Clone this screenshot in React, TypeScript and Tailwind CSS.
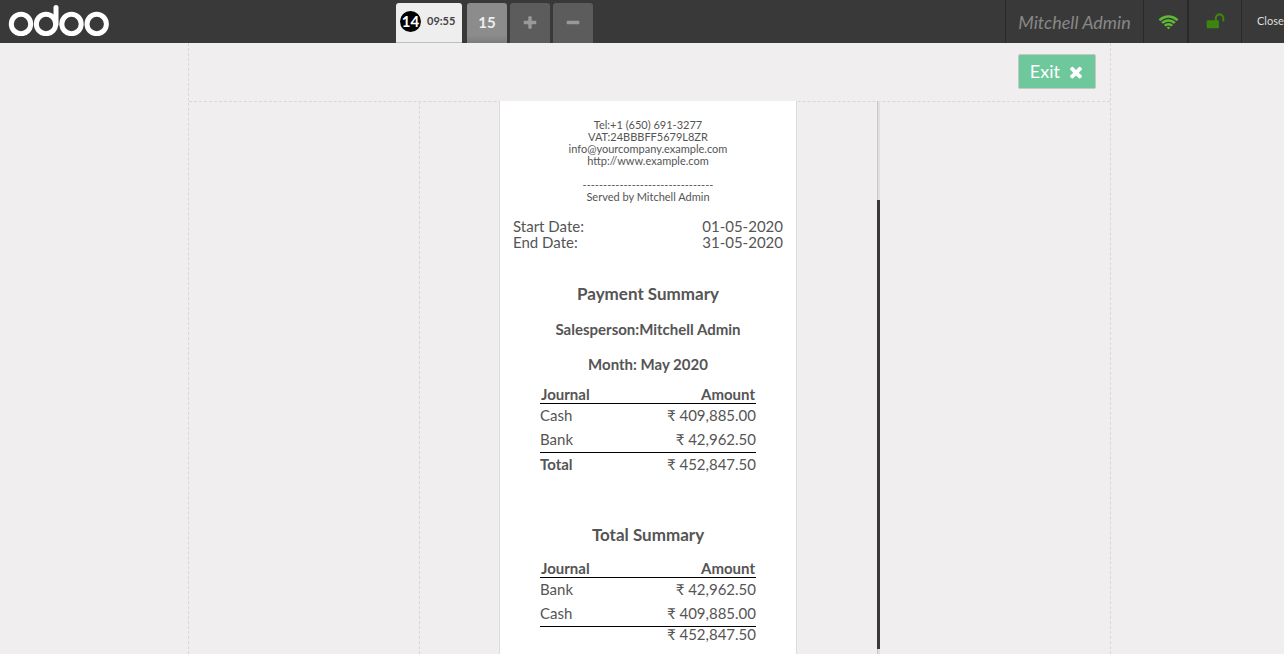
import React from "react";

type IconProps = { d: string; className?: string; viewBox?: string };

function Icon({ d, className, viewBox = "0 0 1792 1792" }: IconProps) {
  return (
    <svg viewBox={viewBox} className={className} fill="currentColor" aria-hidden="true">
      <path d={d} />
    </svg>
  );
}

const TIMES =
  "M1490 1322q0 40-28 68l-136 136q-28 28-68 28t-68-28l-294-294-294 294q-28 28-68 28t-68-28l-136-136q-28-28-28-68t28-68l294-294-294-294q-28-28-28-68t28-68l136-136q28-28 68-28t68 28l294 294 294-294q28-28 68-28t68 28l136 136q28 28 28 68t-28 68l-294 294 294 294q28 28 28 68z";
const PLUS =
  "M1600 736v192q0 40-28 68t-68 28h-416v416q0 40-28 68t-68 28h-192q-40 0-68-28t-28-68v-416h-416q-40 0-68-28t-28-68v-192q0-40 28-68t68-28h416v-416q0-40 28-68t68-28h192q40 0 68 28t28 68v416h416q40 0 68 28t28 68z";
const MINUS =
  "M1600 736v192q0 40-28 68t-68 28h-1216q-40 0-68-28t-28-68v-192q0-40 28-68t68-28h1216q40 0 68 28t28 68z";
const UNLOCK =
  "M1728 576v256q0 26-19 45t-45 19h-64q-26 0-45-19t-19-45v-256q0-106-75-181t-181-75-181 75-75 181v192h96q40 0 68 28t28 68v576q0 40-28 68t-68 28h-960q-40 0-68-28t-28-68v-576q0-40 28-68t68-28h672v-192q0-185 131.500-316.500t316.500-131.500 316.500 131.500 131.500 316.500z";
const WIFI =
  "M1024 1523q-20 0-93-73.500t-73-93.500q0-32 62.500-54t103.500-22 103.500 22 62.500 54q0 20-73 93.500t-93 73.500zm270-271q-2 0-40-25t-101.500-50-128.500-25-128.500 25-101 50-40.500 25q-18 0-93.500-75t-75.500-93q0-13 10-23 78-77 196-121t233-44 233 44 196 121q10 10 10 23 0 18-75.500 93t-93.500 75zm273-272q-11 0-23-8-136-105-252-154.500t-268-49.500q-85 0-170.500 22t-149 53-113.500 62-79 53-31 22q-17 0-92-75t-75-93q0-12 10-22 132-132 320-205t380-73 380 73 320 205q10 10 10 22 0 18-75 93t-92 75zm271-271q-11 0-22-9-179-157-371.500-236.500t-420.500-79.500-420.500 79.500-371.500 236.500q-11 9-22 9-17 0-92.500-75t-75.500-93q0-13 10-23 187-186 445-288t527-102 527 102 445 288q10 10 10 23 0 18-75.500 93t-92.500 75z";

function Logo() {
  return (
    <svg viewBox="0 0 102 32" className="h-8 w-[102px]" fill="none" stroke="#fff" strokeWidth="5" aria-label="odoo" role="img">
      <circle cx="13" cy="20" r="9.700" />
      <circle cx="38" cy="20" r="9.700" />
      <circle cx="63.500" cy="20" r="9.700" />
      <circle cx="88.700" cy="20" r="9.700" />
      <path d="M48 20V3.500" strokeLinecap="round" />
    </svg>
  );
}

type Row = { journal: string; amount: string };
type SummaryProps = { rows: Row[]; totalLabel?: string; total: string };

function SummaryTable({ rows, totalLabel, total }: SummaryProps) {
  return (
    <table className="mx-auto w-4/5 border-separate border-spacing-0 text-[15px] leading-[14px]">
      <thead>
        <tr>
          <th className="h-[19px] border-b border-black px-px py-0 text-left font-bold">Journal</th>
          <th className="h-[19px] border-b border-black px-px py-0 text-right font-bold">Amount</th>
        </tr>
      </thead>
      <tbody>
        {rows.map((row) => (
          <tr key={row.journal}>
            <td className="h-6 p-0 pb-[2px]">{row.journal}</td>
            <td className="h-6 p-0 pb-[2px] text-right">{row.amount}</td>
          </tr>
        ))}
      </tbody>
      <tfoot>
        <tr>
          <td className={totalLabel ? "h-[25px] border-t border-black p-0 pb-[2px] font-bold" : "h-[17px] border-t border-black p-0 pb-[2px]"}>{totalLabel}</td>
          <td className="border-t border-black p-0 pb-[2px] text-right">{total}</td>
        </tr>
      </tfoot>
    </table>
  );
}

function Header() {
  return (
    <header className="flex h-[43px] shrink-0 overflow-hidden bg-[#393939]">
      <div className="flex w-[396px] shrink-0 items-start pt-1 pl-2">
        <Logo />
      </div>
      <nav className="flex flex-1 items-end">
        <button className="flex h-10 w-[66px] items-center gap-[6px] rounded-t-[3px] border-b border-[#bfbfbf] bg-[#eee] pb-[2px] pl-1 text-[#444]">
          <span className="flex size-[21px] items-center justify-center rounded-full bg-black text-[15px] font-bold text-white">14</span>
          <span className="text-[11px] font-bold">09:55</span>
        </button>
        <button className="ml-[5px] h-10 w-10 rounded-t-[3px] bg-linear-to-b from-[#8c8c8c] from-80% to-[#7c7c7c] pb-[2px] text-[15px] font-bold text-[#eee]">15</button>
        <button aria-label="New order" className="ml-[3px] flex h-10 w-10 items-center justify-center rounded-t-[3px] bg-[#5c5c5c] text-[#999]">
          <Icon d={PLUS} className="size-4" />
        </button>
        <button aria-label="Delete order" className="ml-[3px] flex h-10 w-10 items-center justify-center rounded-t-[3px] bg-[#5c5c5c] text-[#999]">
          <Icon d={MINUS} className="size-4" />
        </button>
      </nav>
      <div className="flex shrink-0">
        <div className="flex w-[138px] items-center justify-center border-l border-[#292929] pt-[2px] text-[18px] text-[#888] italic">Mitchell Admin</div>
        <div className="flex w-[45px] items-center justify-center border-x border-[#292929] pt-[2px] pl-[6px] text-[#5eb937]">
          <Icon d={WIFI} viewBox="0 0 2048 1792" className="h-[18px] w-[21px]" />
        </div>
        <div className="flex w-[53px] items-center justify-center border-l border-[#292929] text-[#3d8410]">
          <Icon d={UNLOCK} className="size-[19px]" />
        </div>
        <button className="w-[43px] border-l border-[#292929] pl-[15px] text-left text-[11px] text-[#ddd]">Close</button>
      </div>
    </header>
  );
}

function Receipt() {
  return (
    <article className="w-[298px] border-x border-[#dcdcdc] bg-white px-[13px] pt-[18px] pb-8">
      <div className="text-center text-[11px] leading-3">
        <p>Tel:+1 (650) 691-3277</p>
        <p>VAT:24BBBFF5679L8ZR</p>
        <p>info@yourcompany.example.com</p>
        <p>http://www.example.com</p>
        <p className="mt-3">--------------------------------</p>
        <p>Served by Mitchell Admin</p>
      </div>
      <dl className="mt-[15px] grid grid-cols-2 text-[15px] leading-4">
        <dt>Start Date:</dt>
        <dd className="text-right">01-05-2020</dd>
        <dt>End Date:</dt>
        <dd className="text-right">31-05-2020</dd>
      </dl>
      <h2 className="mt-[34px] text-center text-[17px] leading-5 font-bold">Payment Summary</h2>
      <p className="mt-[17px] text-center text-[15px] leading-4 font-bold">Salesperson:Mitchell Admin</p>
      <p className="mt-[19px] mb-[13px] text-center text-[15px] leading-4 font-bold">Month: May 2020</p>
      <SummaryTable
        rows={[
          { journal: "Cash", amount: "₹ 409,885.00" },
          { journal: "Bank", amount: "₹ 42,962.50" },
        ]}
        totalLabel="Total"
        total="₹ 452,847.50"
      />
      <h2 className="mt-12 mb-[14px] text-center text-[17px] leading-5 font-bold">Total Summary</h2>
      <SummaryTable
        rows={[
          { journal: "Bank", amount: "₹ 42,962.50" },
          { journal: "Cash", amount: "₹ 409,885.00" },
        ]}
        total="₹ 452,847.50"
      />
    </article>
  );
}

export default function App() {
  return (
    <div className="flex h-screen flex-col overflow-hidden bg-[#f0eeee] font-[Lato,'Liberation_Sans',sans-serif] text-[#555]">
      <Header />
      <main className="grid min-h-0 flex-1 grid-cols-[188fr_923fr_173fr]">
        <section className="col-start-2 flex min-h-0 flex-col border-x border-dashed border-[#d8d8d8]">
          <div className="flex h-[59px] shrink-0 items-start justify-end border-b border-dashed border-[#d8d8d8] pt-[11px] pr-[14px]">
            <button className="flex h-[35px] items-center gap-[7px] rounded-[2px] border border-[#c4c9c6] bg-[#6ec89b] pr-[10px] pl-[11px] text-[18px] text-white">
              Exit
              <Icon d={TIMES} className="size-[18px]" />
            </button>
          </div>
          <div className="-mt-px grid min-h-0 flex-1 grid-cols-[231fr_457fr_233fr]">
            <div className="border-r border-dashed border-[#d8d8d8]" />
            <div className="flex min-h-0 justify-center overflow-hidden pr-px">
              <Receipt />
            </div>
            <div className="flex">
              <div className="flex w-[3px] flex-col border-l border-[#c8c8c8] bg-[#e0e0e0]">
                <div className="flex-[99]" />
                <div className="-ml-px flex-[449] bg-[#393939]" />
                <div className="flex-[5]" />
              </div>
            </div>
          </div>
        </section>
      </main>
    </div>
  );
}
